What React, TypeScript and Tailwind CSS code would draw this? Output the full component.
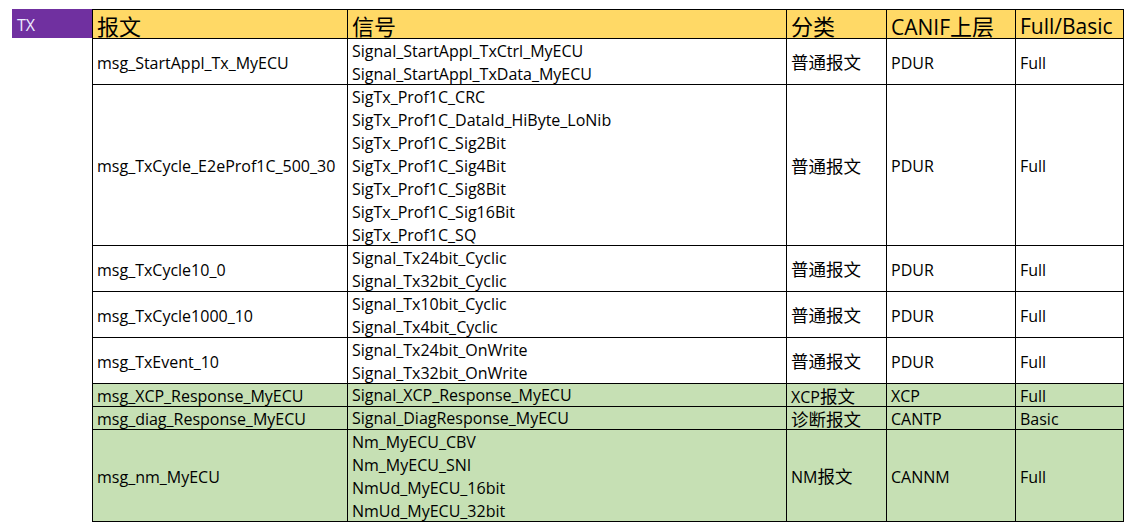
const rows = [
  { msg: "msg_StartAppl_Tx_MyECU", signals: ["Signal_StartAppl_TxCtrl_MyECU", "Signal_StartAppl_TxData_MyECU"], kind: "普通报文", upper: "PDUR", mode: "Full", h: "h-[45px]" },
  {
    msg: "msg_TxCycle_E2eProf1C_500_30",
    signals: [
      "SigTx_Prof1C_CRC",
      "SigTx_Prof1C_DataId_HiByte_LoNib",
      "SigTx_Prof1C_Sig2Bit",
      "SigTx_Prof1C_Sig4Bit",
      "SigTx_Prof1C_Sig8Bit",
      "SigTx_Prof1C_Sig16Bit",
      "SigTx_Prof1C_SQ",
    ],
    kind: "普通报文",
    upper: "PDUR",
    mode: "Full",
    h: "h-[160px]",
  },
  { msg: "msg_TxCycle10_0", signals: ["Signal_Tx24bit_Cyclic", "Signal_Tx32bit_Cyclic"], kind: "普通报文", upper: "PDUR", mode: "Full", h: "h-[45px]" },
  { msg: "msg_TxCycle1000_10", signals: ["Signal_Tx10bit_Cyclic", "Signal_Tx4bit_Cyclic"], kind: "普通报文", upper: "PDUR", mode: "Full", h: "h-[45px]" },
  { msg: "msg_TxEvent_10", signals: ["Signal_Tx24bit_OnWrite", "Signal_Tx32bit_OnWrite"], kind: "普通报文", upper: "PDUR", mode: "Full", h: "h-[45px]" },
  { msg: "msg_XCP_Response_MyECU", signals: ["Signal_XCP_Response_MyECU"], kind: "XCP报文", upper: "XCP", mode: "Full", h: "h-[22px]", green: true },
  { msg: "msg_diag_Response_MyECU", signals: ["Signal_DiagResponse_MyECU"], kind: "诊断报文", upper: "CANTP", mode: "Basic", h: "h-[22px]", green: true },
  {
    msg: "msg_nm_MyECU",
    signals: ["Nm_MyECU_CBV", "Nm_MyECU_SNI", "NmUd_MyECU_16bit", "NmUd_MyECU_32bit"],
    kind: "NM报文",
    upper: "CANNM",
    mode: "Full",
    h: "h-[91px]",
    green: true,
  },
];

const font = "font-['Open_Sans','Noto_Sans_CJK_SC',sans-serif]";

// the CJK glyphs in the sheet run a bit larger than the latin ones
const Mixed = ({ text, cjk }: { text: string; cjk: string }) => (
  <>
    {text.split(/([\u4e00-\u9fff]+)/).map((part, i) =>
      /[\u4e00-\u9fff]/.test(part) ? (
        <span key={i} className={cjk}>{part}</span>
      ) : (
        <span key={i}>{part}</span>
      ),
    )}
  </>
);

export default function App() {
  return (
    <div className={`flex min-h-[530px] w-[1131px] items-start bg-white pt-[9px] pl-[12px] text-black ${font}`}>
      {/* TX label sits left of the table */}
      <div className="flex h-[29px] w-[80px] items-center bg-[#7030A0] pt-[3px] pl-[5px] text-[16px] leading-none text-[#ececff]">TX</div>

      <div className="grid w-[1032px] grid-cols-[254px_438px_99px_128px_107px] gap-px bg-black p-px">
        {["报文", "信号", "分类", "CANIF上层", "Full/Basic"].map((t) => (
          <div key={t} className="flex h-[28px] items-center bg-[#FFD966] pt-[4px] pl-[4px] text-[21px] leading-[22px] whitespace-nowrap">
            <span><Mixed text={t} cjk="text-[22px]" /></span>
          </div>
        ))}

        {rows.map((r) => {
          const bg = r.green ? "bg-[#C6E0B4]" : "bg-white";
          const cell = `flex ${r.h} ${bg} items-center pt-[2px] pl-[4px] text-[16px] whitespace-nowrap`;
          return [
            <div key={r.msg + "m"} className={cell}>{r.msg}</div>,
            <div key={r.msg + "s"} className={`flex ${r.h} ${bg} flex-col pt-[1px] pl-[4px] text-[16px] leading-[23px] whitespace-nowrap`}>
              {r.signals.map((s) => (
                <span key={s} className={r.signals.length === 1 ? "leading-[21px]" : ""}>{s}</span>
              ))}
            </div>,
            <div key={r.msg + "k"} className={cell}>
              <span><Mixed text={r.kind} cjk="text-[17.5px]" /></span>
            </div>,
            <div key={r.msg + "u"} className={cell}>{r.upper}</div>,
            <div key={r.msg + "f"} className={cell}>{r.mode}</div>,
          ];
        })}
      </div>
    </div>
  );
}
